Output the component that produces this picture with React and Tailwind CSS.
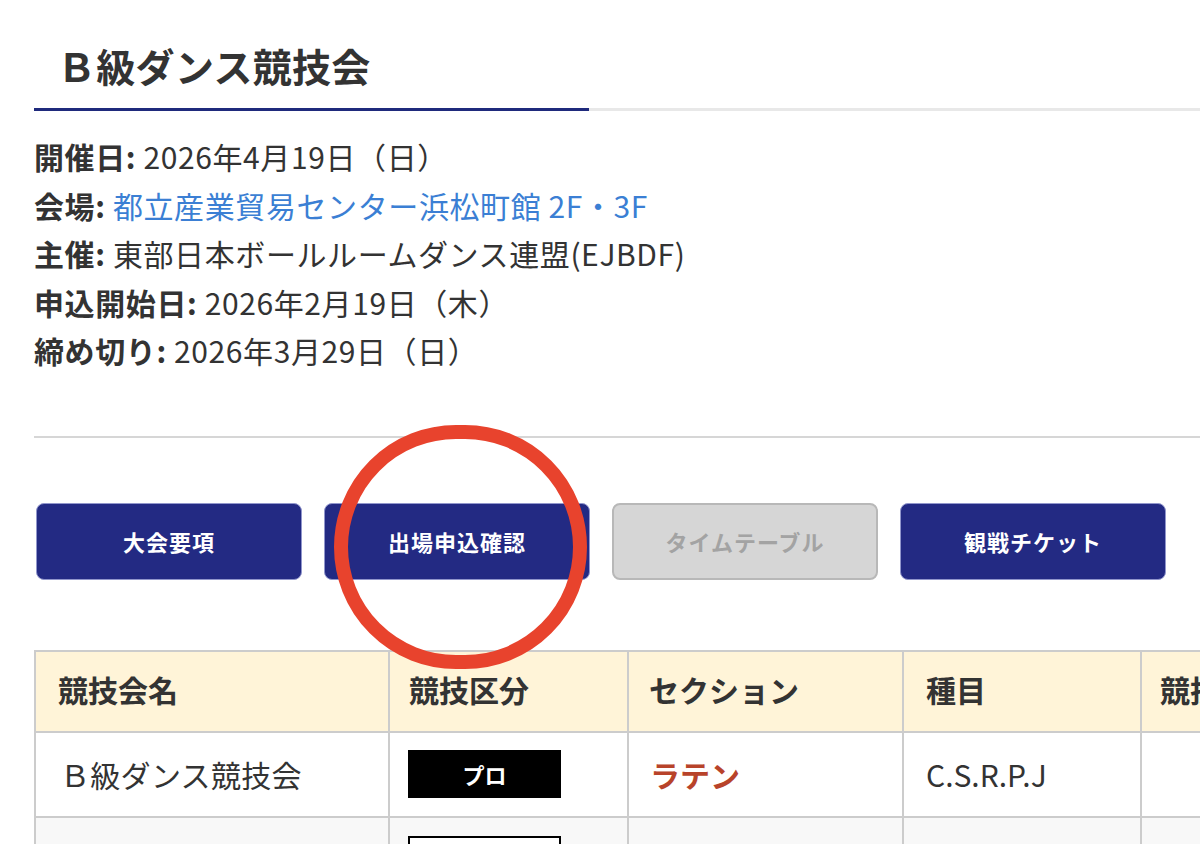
export default function App() {
  const btn =
    "w-[266px] h-[77px] rounded-[8px] flex items-center justify-center text-[22px] font-bold tracking-[1px]";
  return (
    <div className="relative w-[1200px] h-[844px] overflow-hidden bg-white text-[#333] font-['Noto_Sans_CJK_JP','Noto_Sans',sans-serif]">
      <div className="pl-[34px]">
        <h1 className="pt-[40px] pl-[23px] text-[39px] font-bold leading-[50px] tracking-[0.3px]">Ｂ級ダンス競技会</h1>
        <div className="mt-[18px] flex items-start">
          <div className="w-[555px] h-[3px] bg-[#1f2a7c]" />
          <div className="flex-1 h-[3px] bg-[#e8e8e8]" />
        </div>
        <div className="mt-[21px] text-[30px] leading-[48.5px] tracking-[0.6px]">
          <p><span className="font-bold">開催日:</span> 2026年4月19日（日）</p>
          <p><span className="font-bold">会場:</span> <span className="text-[#3b7fd4]">都立産業貿易センター浜松町館 2F・3F</span></p>
          <p><span className="font-bold">主催:</span> 東部日本ボールルームダンス連盟(EJBDF)</p>
          <p><span className="font-bold">申込開始日:</span> 2026年2月19日（木）</p>
          <p><span className="font-bold">締め切り:</span> 2026年3月29日（日）</p>
        </div>
        <div className="mt-[61px] h-[2px] bg-[#d6d6d6]" />
        <div className="mt-[65px] flex gap-[22px] pl-[2px]">
          <div className={btn + " bg-[#232a83] text-white border border-[#9196cc]"}>大会要項</div>
          <div className={btn + " bg-[#232a83] text-white border border-[#9196cc]"}>出場申込確認</div>
          <div className={btn + " bg-[#d6d6d6] text-[#a3a3a3] border-2 border-[#b8b8b8]"}>タイムテーブル</div>
          <div className={btn + " bg-[#232a83] text-white border border-[#9196cc]"}>観戦チケット</div>
        </div>
        <table className="mt-[70px] table-fixed border-collapse w-[1420px] text-[30px]">
          <colgroup>
            <col className="w-[354px]" />
            <col className="w-[239px]" />
            <col className="w-[275px]" />
            <col className="w-[238px]" />
            <col className="w-[314px]" />
          </colgroup>
          <thead>
            <tr className="h-[81px] bg-[#fff4d8] font-bold">
              <th className="border-2 border-[#cccccc] text-left font-bold pl-[22px] pb-[4px]">競技会名</th>
              <th className="border-2 border-[#cccccc] text-left font-bold pl-[19px] pb-[4px]">競技区分</th>
              <th className="border-2 border-[#cccccc] text-left font-bold pl-[20px] pb-[4px]">セクション</th>
              <th className="border-2 border-[#cccccc] text-left font-bold pl-[22px] pb-[4px]">種目</th>
              <th className="border-2 border-[#cccccc] text-left font-bold pl-[18px] pb-[4px]">競技時間</th>
            </tr>
          </thead>
          <tbody>
            <tr className="h-[85px] bg-white">
              <td className="border-2 border-[#cccccc] pl-[24px] tracking-[0.3px]">Ｂ級ダンス競技会</td>
              <td className="border-2 border-[#cccccc] pl-[18px]">
                <div className="w-[153px] h-[48px] bg-black text-white text-[22px] font-bold flex items-center justify-center">プロ</div>
              </td>
              <td className="border-2 border-[#cccccc] pl-[21px] font-bold text-[#b8432a]">ラテン</td>
              <td className="border-2 border-[#cccccc] pl-[22px]">C.S.R.P.J</td>
              <td className="border-2 border-[#cccccc]"></td>
            </tr>
            <tr className="h-[85px] bg-[#f8f8f8] align-top">
              <td className="border-2 border-[#cccccc] pl-[24px]"></td>
              <td className="border-2 border-[#cccccc] pl-[18px] pt-[18px]">
                <div className="w-[153px] h-[48px] bg-white border-2 border-black" />
              </td>
              <td className="border-2 border-[#cccccc]"></td>
              <td className="border-2 border-[#cccccc]"></td>
              <td className="border-2 border-[#cccccc]"></td>
            </tr>
          </tbody>
        </table>
      </div>
      <div className="absolute left-[334px] top-[425px] w-[253px] h-[244px] rounded-full border-[14px] border-[#e8432d]" />
    </div>
  );
}
